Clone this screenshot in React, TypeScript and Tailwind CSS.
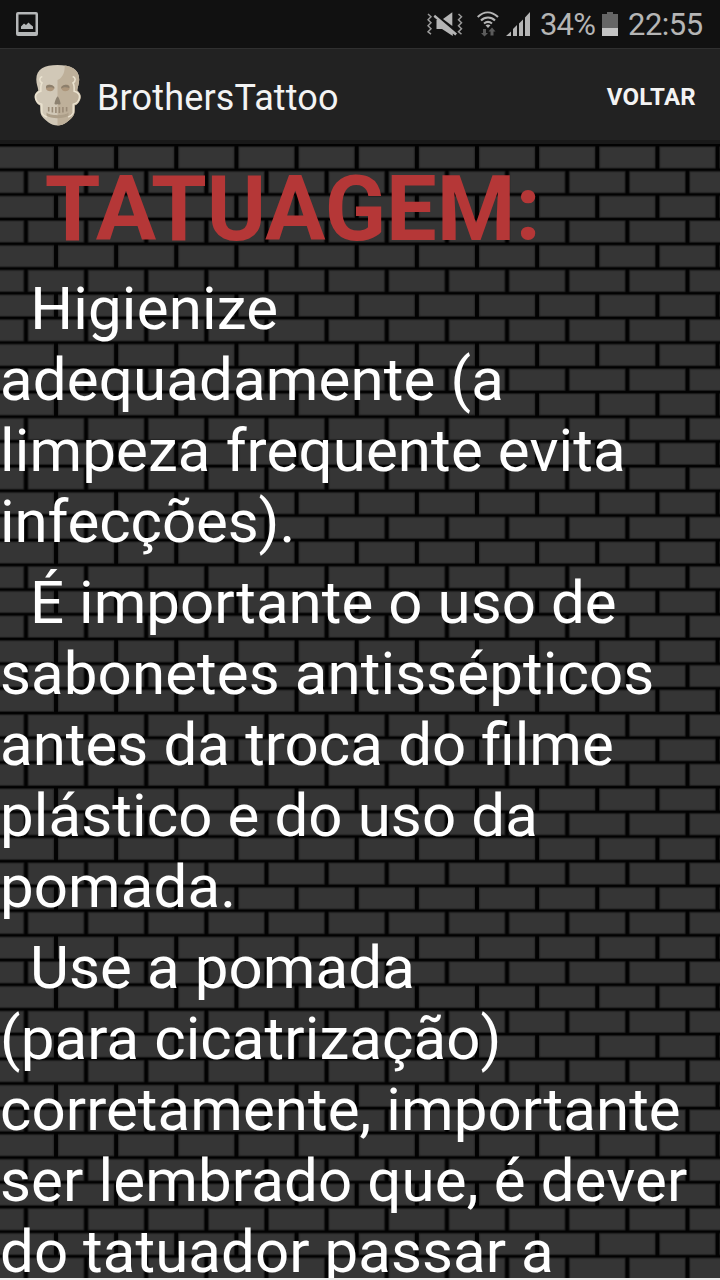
import React from "react";

function BrickWall() {
  return (
    <svg className="absolute inset-0 h-full w-full" aria-hidden="true">
      <defs>
        <filter id="soft" x="-5%" y="-5%" width="110%" height="110%">
          <feGaussianBlur stdDeviation="0.45" />
        </filter>
        <pattern id="bricks" x="56" y="1" width="60.14" height="49.39" patternUnits="userSpaceOnUse">
          <rect width="61" height="50" fill="#020202" />
          <g filter="url(#soft)">
            <rect x="2" y="1.4" width="56.2" height="22" fill="#2a2a2a" />
            <rect x="3.2" y="2.6" width="53.8" height="19.8" fill="#353535" />
            <rect x="-28.1" y="26.1" width="56.2" height="22" fill="#2a2a2a" />
            <rect x="-26.9" y="27.3" width="53.8" height="19.8" fill="#353535" />
            <rect x="32" y="26.1" width="56.2" height="22" fill="#2a2a2a" />
            <rect x="33.2" y="27.3" width="53.8" height="19.8" fill="#353535" />
          </g>
        </pattern>
      </defs>
      <rect width="100%" height="100%" fill="url(#bricks)" />
    </svg>
  );
}

function Skull() {
  return (
    <svg className="h-[62px] w-[48px] shrink-0" viewBox="0 0 48 62">
      <defs>
        <clipPath id="head">
          <path d="M23.500 1C10.500 1 2.300 5 2.300 15.500c0 5 1.700 7.500 2 11C2.500 28 .3 30 .5 33c.2 3.500 3 8 5.500 8.200.4 4-.2 8 2 11C11.500 56.500 17 61.500 23.500 61.500s12-5 15.500-9.300c2.200-3 1.600-7 2-11C43.500 41 46.500 36.500 46.700 33c.2-3-2-5-3.500-6.500.3-3.500 2-6 2-11C45.200 5 36.500 1 23.500 1Z" />
        </clipPath>
      </defs>
      <g clipPath="url(#head)">
        <rect width="48" height="62" fill="#d1c8b7" />
        <path d="M30.500 0c1 8-2 14-7 16v46h25V0Z" fill="#beb09a" />
        <path
          d="M8.300 12.500c-3 1-3.500 4.500-.3 6.500-1.500 2-1.300 5-1.100 8.200C4 28 1.300 29.500 1.500 33c.3 3.500 2.500 6.500 6.300 7.300V49c1 2 3 3.500 5 4M38.700 12.500c3 1 3.500 4.500.3 6.500 1.500 2 1.300 5 1.100 8.200 2.900.8 5.600 2.300 5.400 5.800-.3 3.500-2.500 6.500-6.300 7.300V49c-1 2-3 3.500-5 4"
          fill="none"
          stroke="#ebe3d0"
          strokeWidth="1.500"
        />
        <path d="M12.500 48.500c3 3.500 19 3.500 22 0v3c-4 3.500-18 3.500-22 0Z" fill="#ad9f89" />
      </g>
      <path d="M12 22.500c0-2.500 6-2.500 8.500.5 0 5-6.500 5.500-8.500 2ZM35.500 22.500c0-2.500-6-2.500-8.500.5 0 5 6.500 5.500 8.500 2Z" fill="#ad967b" />
      <path d="M12 24c-.5-4.500 8-4.500 8.500.5-3-2-5.500-1.500-8.500-.5ZM35.500 24c.5-4.500-8-4.500-8.500.5 3-2 5.500-1.500 8.500-.5Z" fill="#8c7f6c" />
      <path d="M23.600 32.500c-1 0-3.300 6-3 7.500 1 .7 1.700.8 3 0 1.300.8 2 .7 3 0 .2-1.500-2-7.500-3-7.500Z" fill="#8c8170" />
      <path d="M14.700 43v4.500m3.700-4.500v5.500m3.500-5.500v6m3.500-6v6m3.500-6v5.500m3.700-5.500v4.500" stroke="#9a8b77" strokeWidth="1.600" />
    </svg>
  );
}

function StatusBar() {
  return (
    <div className="flex h-[48px] shrink-0 items-start bg-[#111111] text-[#b5b5b5]">
      <svg className="ml-[16px] mt-[12px] h-[24px] w-[22px]" viewBox="0 0 22 24">
        <path fillRule="evenodd" d="M2 0h18a2 2 0 0 1 2 2v20a2 2 0 0 1-2 2H2a2 2 0 0 1-2-2V2a2 2 0 0 1 2-2Zm.5 2.500V20h17V2.500Z" fill="#b5b7b8" />
        <path d="M5 17v-2.500L8 11.500 10 13l2.500-2.500 2 2L17 14.500V17Z" fill="#b5b7b8" />
      </svg>
      <div className="flex-1" />
      <svg className="mt-[10px] h-[28px] w-[37px]" viewBox="0 0 37 28">
        <path d="M1 4l3 2.800-3 3 3 3-3 3 3 3-3 3 3 2.400M31.500 4l3 2.800-3 3 3 3-3 3 3 3-3 3 3 2.400" fill="none" stroke="#999" strokeWidth="1.500" />
        <path d="M16 9l9.300-6.700V16Z" fill="#b5b5b5" />
        <path d="M8 4.800 30 23.600l-1.700 1.900-2.500-2V26L15 19H9.500v-9h.8L6.500 6.700Z" fill="#b5b5b5" />
      </svg>
      <svg className="ml-[13px] mt-[11px] h-[26px] w-[22px]" viewBox="0 0 22 26">
        <path d="M.7 6C7-.1 14.500-.1 21 6M4 9.500c4-4 10-4 14 0M7 12.500c2.500-2 5.500-2 8 0" fill="none" stroke="#b5b5b5" strokeWidth="2.100" />
        <path d="M8.500 14.300q2.500-1.500 5 0L11 17Z" fill="#b5b5b5" />
        <path d="M6 18v4H4l3.500 3.500L11 22H9v-4ZM13.500 24.500v-4h-2l3.500-4 3.500 4h-2v4Z" fill="#5b5b5b" />
      </svg>
      <svg className="ml-[7px] mt-[12px] h-[24px] w-[25px]" viewBox="0 0 25 24">
        <path d="M0 24l5-4.500V24ZM7 24v-7l4-4v11ZM13 24V11.500l4-4V24ZM19 24V5.500L24 0v24Z" fill="#b5b5b5" />
      </svg>
      <span className="ml-[9px] mt-[7px] w-[56px] whitespace-nowrap text-[31px] leading-[36px] tracking-[-0.8px]">34%</span>
      <svg className="ml-[6px] mt-[12px] h-[24px] w-[16px]" viewBox="0 0 16 24">
        <path d="M0 2h5V0h6v2h5v14H0Z" fill="#666" />
        <path d="M0 16h16v8H0Z" fill="#c4c4c4" />
      </svg>
      <span className="ml-[10px] mt-[7px] w-[92px] whitespace-nowrap text-[31px] leading-[36px] tracking-[-0.5px]">22:55</span>
    </div>
  );
}

type Line = { text: string; spacing?: string };

const paragraphs: Line[][] = [
  [
    { text: "\u00a0\u00a0Higienize", spacing: "tracking-[0.2px]" },
    { text: "adequadamente (a", spacing: "tracking-[0.15px]" },
    { text: "limpeza frequente evita", spacing: "tracking-[0.13px]" },
    { text: "infecções).", spacing: "tracking-[-0.1px]" },
  ],
  [
    { text: "\u00a0\u00a0É importante o uso de", spacing: "tracking-[0.06px]" },
    { text: "sabonetes antissépticos" },
    { text: "antes da troca do filme", spacing: "[word-spacing:0.4px]" },
    { text: "plástico e do uso da" },
    { text: "pomada." },
  ],
  [
    { text: "\u00a0\u00a0Use a pomada" },
    { text: "(para cicatrização)" },
    { text: "corretamente, importante", spacing: "tracking-[0.06px]" },
    { text: "ser lembrado que, é dever", spacing: "tracking-[0.14px]" },
    { text: "do tatuador passar a", spacing: "tracking-[0.06px]" },
  ],
];

export default function App() {
  return (
    <div className="flex h-[1280px] w-[720px] flex-col overflow-hidden bg-black font-['Roboto',sans-serif]">
      <StatusBar />
      <header className="flex h-[96px] shrink-0 items-start border-b-[4px] border-t border-b-[#191919] border-t-[#303030] bg-[#222222] pl-[34px] pr-[24px]">
        <div className="mt-[15px]">
          <Skull />
        </div>
        <h1 className="ml-[15px] mt-[28px] text-[36px] leading-[42px] tracking-[0.15px] text-[#f3f3f3]">BrothersTattoo</h1>
        <button className="ml-auto mt-[34px] text-[24px] font-bold leading-[28px] tracking-[0.3px] text-[#f3f3f3]">VOLTAR</button>
      </header>
      <main className="relative h-[1134px] shrink-0 overflow-hidden">
        <BrickWall />
        <div className="relative pt-[13px] text-white">
          <h2 className="whitespace-pre text-[90px] font-bold leading-[106px] text-[#b53737]">{"\u00a0\u00a0TATUAGEM:"}</h2>
          <div className="mt-[10px] flex flex-col gap-[10px]">
            {paragraphs.map((lines, i) => (
              <p key={i} className="text-[60px] leading-[71px]">
                {lines.map(({ text, spacing = "tracking-[0.1px]" }) => (
                  <span key={text} className={`block whitespace-pre ${spacing}`}>
                    {text}
                  </span>
                ))}
              </p>
            ))}
          </div>
        </div>
      </main>
      <div className="h-[2px] shrink-0 bg-[#eeeeee]" />
    </div>
  );
}
